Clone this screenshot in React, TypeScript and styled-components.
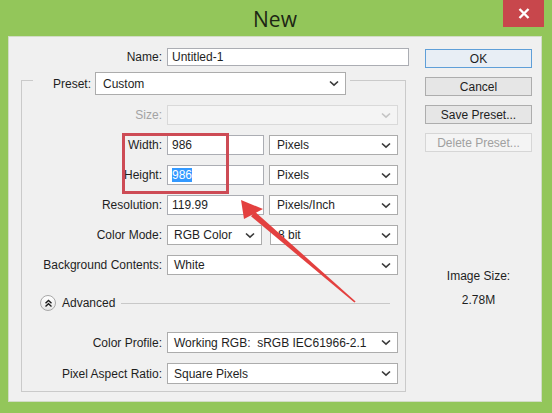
import styled, { createGlobalStyle } from "styled-components";

const GlobalStyle = createGlobalStyle`
  html, body {
    margin: 0;
    padding: 0;
  }
  body {
    width: 552px;
    height: 413px;
    overflow: hidden;
    background: #93c65a;
    font-family: "Liberation Sans", Arial, sans-serif;
    font-size: 12px;
    color: #1e1e1e;
  }
`;

const Chevron = ({ color = "#333" }: { color?: string }) => (
  <svg width="10" height="7" viewBox="0 0 10 7">
    <path d="M1 1.5 L5 5.2 L9 1.5" fill="none" stroke={color} strokeWidth="1.6" />
  </svg>
);

type SelectProps = {
  value?: string;
  width: number;
  height?: number;
  disabled?: boolean;
  pad?: number;
};

const DropDown = ({ value, width, height = 20, disabled, pad = 6 }: SelectProps) => (
  <Select $width={width} $height={height} $disabled={disabled} $pad={pad}>
    <span>{value}</span>
    <Chevron color={disabled ? "#c4c4c4" : "#3a3a3a"} />
  </Select>
);

function App() {
  return (
    <>
      <GlobalStyle />
      <Frame>
        <TitleBar>
          <Title>New</Title>
          <CloseButton>
            <svg width="12" height="11" viewBox="0 0 12 11">
              <path d="M1.5 1 L10.5 10 M10.5 1 L1.5 10" stroke="#fff" strokeWidth="2.4" />
            </svg>
          </CloseButton>
        </TitleBar>

        <Content>
          <LeftColumn>
            <NameRow>
              <Label>Name:</Label>
              <TextBox $width={242} $height={18}>
                Untitled-1
              </TextBox>
            </NameRow>

            <Group>
              <GroupHeader>
                <Label $width={58}>Preset:</Label>
                <DropDown value="Custom" width={251} height={23} pad={7} />
              </GroupHeader>

              <Rows>
                <Row>
                  <Label $disabled>Size:</Label>
                  <DropDown width={231} disabled />
                </Row>
                <Row>
                  <Label>Width:</Label>
                  <Pair $gap={5}>
                    <TextBox $width={97}>986</TextBox>
                    <DropDown value="Pixels" width={129} pad={7} />
                  </Pair>
                </Row>
                <Row>
                  <Label>Height:</Label>
                  <Pair $gap={5}>
                    <TextBox $width={97}>
                      <Selected>986</Selected>
                    </TextBox>
                    <DropDown value="Pixels" width={129} pad={7} />
                  </Pair>
                </Row>
                <Row>
                  <Label>Resolution:</Label>
                  <Pair $gap={5}>
                    <TextBox $width={97}>119.99</TextBox>
                    <DropDown value="Pixels/Inch" width={129} pad={7} />
                  </Pair>
                </Row>
                <Row>
                  <Label>Color Mode:</Label>
                  <Pair $gap={8}>
                    <DropDown value="RGB Color" width={95} />
                    <DropDown value="8 bit" width={128} pad={7} />
                  </Pair>
                </Row>
                <Row>
                  <Label>Background Contents:</Label>
                  <DropDown value="White" width={231} />
                </Row>
              </Rows>

              <AdvancedRow>
                <RoundToggle>
                  <svg width="9" height="9" viewBox="0 0 9 9">
                    <path
                      d="M1.5 4.2 L4.5 1.4 L7.5 4.2 M1.5 7.6 L4.5 4.8 L7.5 7.6"
                      fill="none"
                      stroke="#1c1c1c"
                      strokeWidth="1.4"
                    />
                  </svg>
                </RoundToggle>
                <AdvancedText>Advanced</AdvancedText>
                <Rule />
              </AdvancedRow>

              <Rows $top={19}>
                <Row>
                  <Label>Color Profile:</Label>
                  <DropDown value="Working RGB:  sRGB IEC61966-2.1" width={231} height={21} />
                </Row>
                <Row>
                  <Label>Pixel Aspect Ratio:</Label>
                  <DropDown value="Square Pixels" width={231} height={21} />
                </Row>
              </Rows>
            </Group>
          </LeftColumn>

          <RightColumn>
            <Button $primary>OK</Button>
            <Button>Cancel</Button>
            <Button>Save Preset...</Button>
            <Button $disabled>Delete Preset...</Button>
            <SizeCaption>Image Size:</SizeCaption>
            <SizeValue>2.78M</SizeValue>
          </RightColumn>
        </Content>

        <Highlight />
        <ArrowLayer width="552" height="413" viewBox="0 0 552 413">
          <polygon
            points="255,211.8 251,216.2 354.4,302.6 355.6,301.4"
            fill="#e3403f"
          />
          <polygon points="241,200 263,209 244,219" fill="#e3403f" />
        </ArrowLayer>
      </Frame>
    </>
  );
}

export default App;

const Frame = styled.div`
  position: relative;
  width: 552px;
  height: 413px;
  box-sizing: border-box;
  padding: 0 10px 11px 8px;
  display: flex;
  flex-direction: column;
  background: #93c65a;
`;

const TitleBar = styled.div`
  position: relative;
  height: 36px;
  flex: none;
  display: flex;
  align-items: center;
  justify-content: center;
`;

const Title = styled.span`
  font-family: "Open Sans", "Noto Sans", sans-serif;
  font-size: 21px;
  line-height: 1;
  color: #1d2614;
  margin-top: 2px;
`;

const CloseButton = styled.div`
  position: absolute;
  top: 0;
  right: -2px;
  width: 41px;
  height: 27px;
  background: #c8474c;
  display: flex;
  align-items: center;
  justify-content: center;
`;

const Content = styled.div`
  flex: 1;
  display: flex;
  background: #f0f0f0;
  border: 1px solid #d2dcc6;
  padding: 11px 0 0 12px;
`;

const LeftColumn = styled.div`
  width: 388px;
  display: flex;
  flex-direction: column;
`;

const NameRow = styled.div`
  display: grid;
  grid-template-columns: 141px auto;
  column-gap: 5px;
  align-items: center;
`;

const Label = styled.span<{ $width?: number; $disabled?: boolean }>`
  ${(p) => (p.$width ? `width: ${p.$width}px; flex: none;` : "")}
  text-align: right;
  white-space: nowrap;
  color: ${(p) => (p.$disabled ? "#a3a3a3" : "#1e1e1e")};
`;

const TextBox = styled.div<{ $width: number; $height?: number }>`
  box-sizing: border-box;
  width: ${(p) => p.$width}px;
  height: ${(p) => p.$height ?? 20}px;
  background: #fff;
  border: 1px solid #abadb3;
  padding: 0 4px;
  display: flex;
  align-items: center;
  white-space: nowrap;
`;

const Selected = styled.span`
  background: #3399ff;
  color: #fff;
  line-height: 14px;
`;

const Select = styled.div<{
  $width: number;
  $height: number;
  $disabled?: boolean;
  $pad: number;
}>`
  box-sizing: border-box;
  width: ${(p) => p.$width}px;
  height: ${(p) => p.$height}px;
  flex: none;
  display: flex;
  align-items: center;
  justify-content: space-between;
  padding: 0 6px 0 ${(p) => p.$pad}px;
  background: ${(p) => (p.$disabled ? "#f4f4f4" : "#fff")};
  border: 1px solid ${(p) => (p.$disabled ? "#d9d9d9" : "#acacac")};
  white-space: pre;
  overflow: hidden;
`;

const Group = styled.div`
  box-sizing: border-box;
  width: 385px;
  margin-top: 14px;
  border: 1px solid #cacaca;
  padding-bottom: 7px;
`;

const GroupHeader = styled.div`
  width: 317px;
  margin: -9px 0 0 11px;
  padding-right: 4px;
  box-sizing: border-box;
  display: flex;
  align-items: center;
  gap: 4px;
  background: #f0f0f0;
`;

const Rows = styled.div<{ $top?: number }>`
  display: flex;
  flex-direction: column;
  gap: 10px;
  margin-top: ${(p) => p.$top ?? 10}px;
`;

const Row = styled.div`
  display: grid;
  grid-template-columns: 140px auto;
  column-gap: 5px;
  align-items: center;
`;

const Pair = styled.div<{ $gap: number }>`
  display: flex;
  gap: ${(p) => p.$gap}px;
`;

const AdvancedRow = styled.div`
  height: 20px;
  margin: 18px 15px 0 18px;
  display: flex;
  align-items: center;
`;

const RoundToggle = styled.div`
  box-sizing: border-box;
  width: 16px;
  height: 16px;
  border-radius: 50%;
  border: 1px solid #a8a8a8;
  background: linear-gradient(#ffffff, #e6e6e6);
  display: flex;
  align-items: center;
  justify-content: center;
`;

const AdvancedText = styled.span`
  margin-left: 6px;
`;

const Rule = styled.div`
  flex: 1;
  height: 1px;
  margin-left: 6px;
  background: #c8c8c8;
`;

const RightColumn = styled.div`
  width: 107px;
  margin-left: 16px;
  padding-top: 1px;
  display: flex;
  flex-direction: column;
  gap: 9px;
`;

const Button = styled.div<{ $primary?: boolean; $disabled?: boolean }>`
  box-sizing: border-box;
  height: 19px;
  display: flex;
  align-items: center;
  justify-content: center;
  background: ${(p) => (p.$disabled ? "#f4f4f4" : p.$primary ? "#e8eef5" : "#e6e6e6")};
  border: 1px solid
    ${(p) => (p.$disabled ? "#d6d6d6" : p.$primary ? "#5f9fd8" : "#adadad")};
  color: ${(p) => (p.$disabled ? "#a0a0a0" : "#1e1e1e")};
`;

const SizeCaption = styled.div`
  margin-top: 108px;
  text-align: center;
  line-height: 14px;
`;

const SizeValue = styled.div`
  margin-top: 1px;
  text-align: center;
  line-height: 14px;
`;

const Highlight = styled.div`
  position: absolute;
  left: 122px;
  top: 133px;
  width: 107px;
  height: 61px;
  box-sizing: border-box;
  border: 3px solid #cd4b55;
  pointer-events: none;
`;

const ArrowLayer = styled.svg`
  position: absolute;
  left: 0;
  top: 0;
  pointer-events: none;
`;
